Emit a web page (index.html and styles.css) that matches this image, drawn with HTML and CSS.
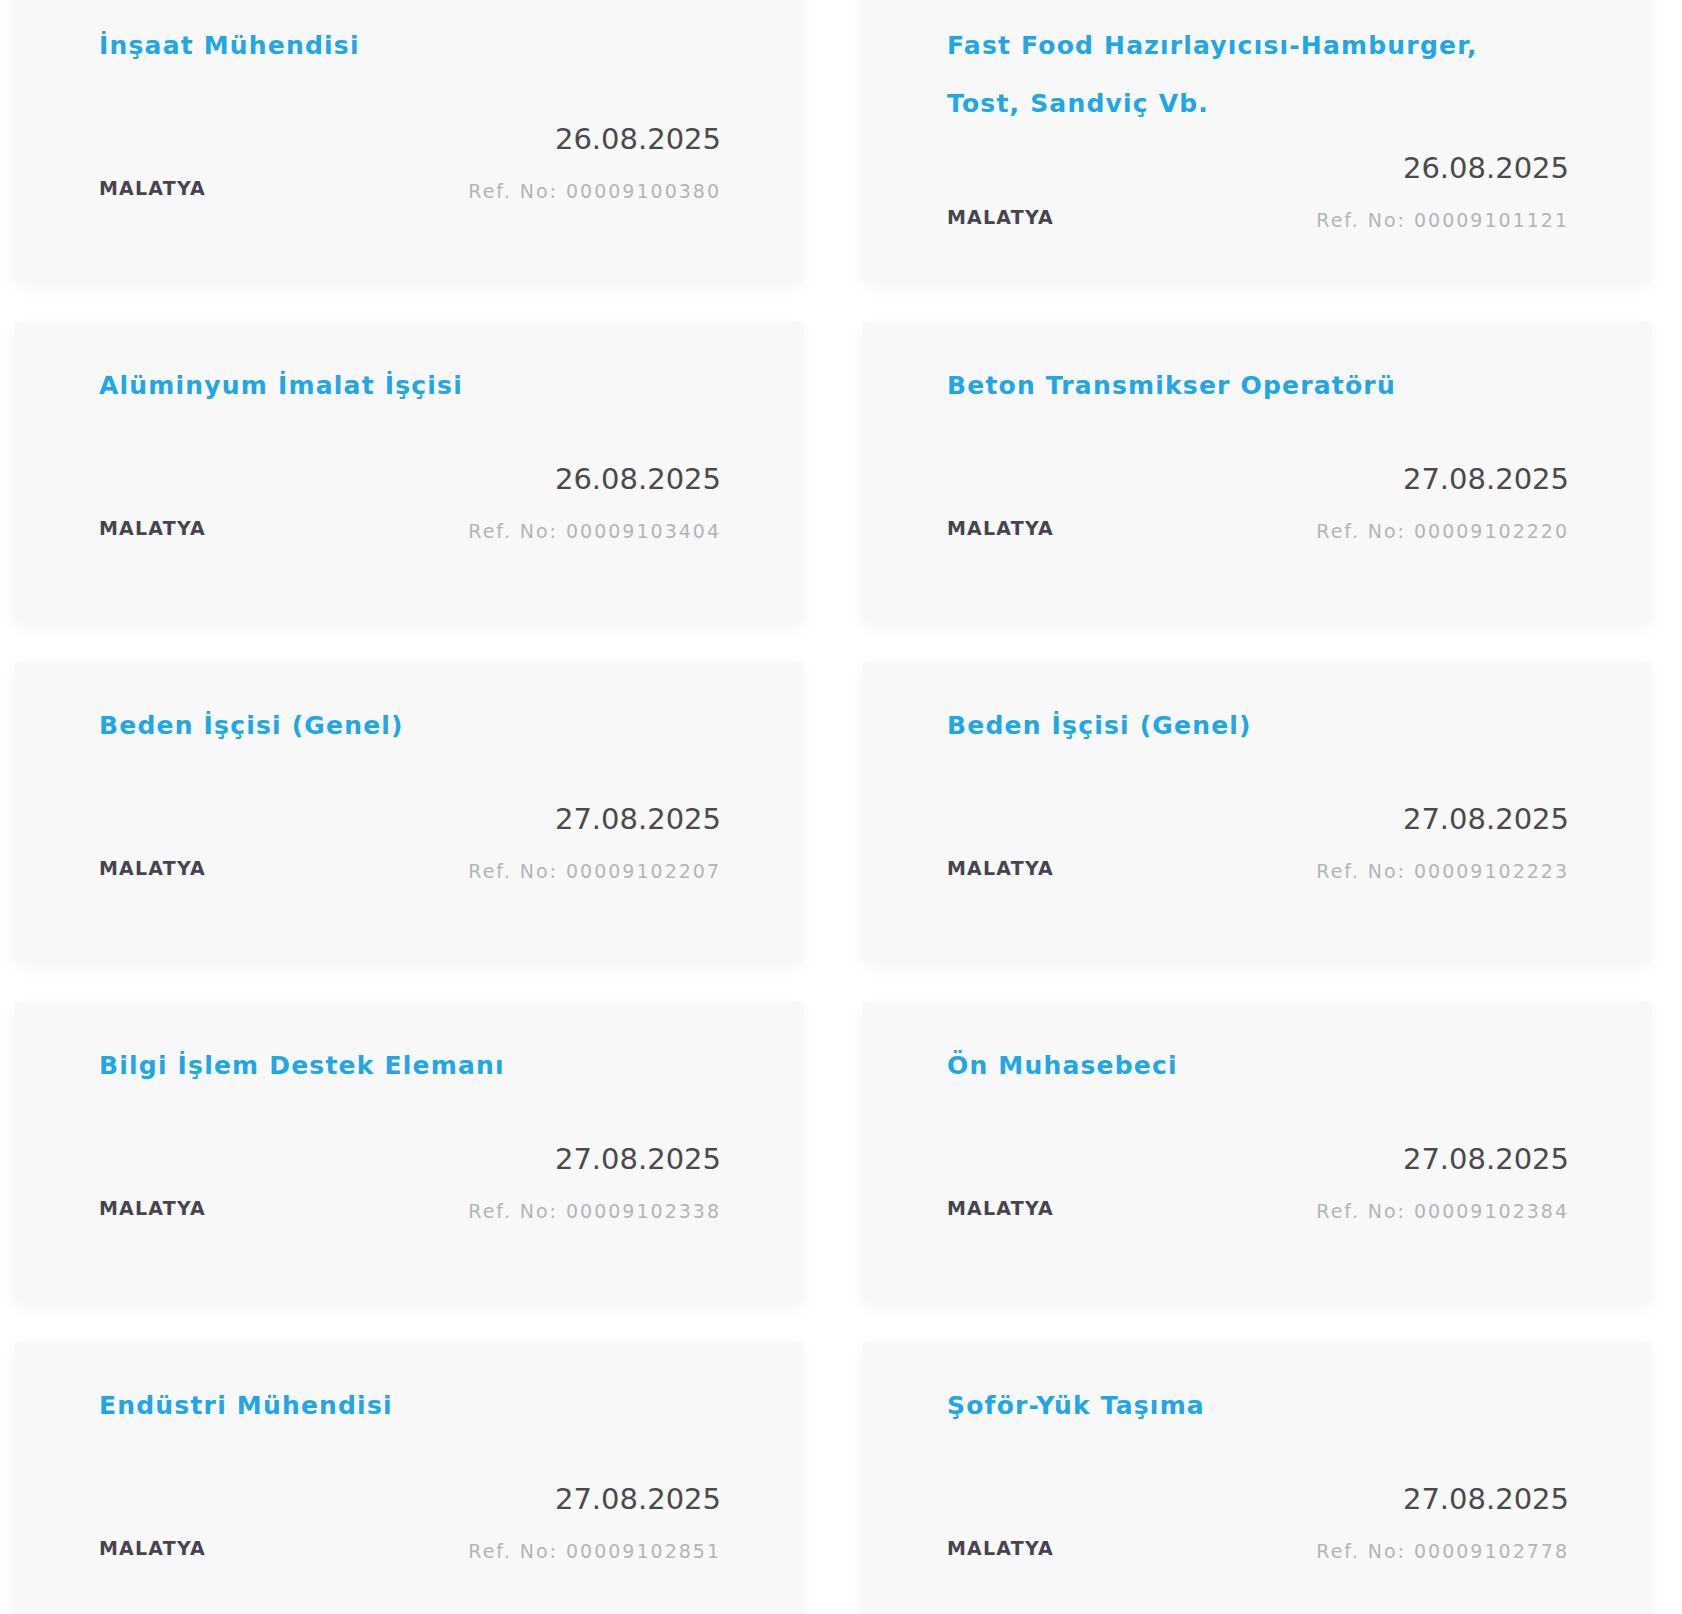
FILE: index.html
```html
<!DOCTYPE html>
<html lang="tr">
<head>
<meta charset="utf-8">
<title>İş İlanları</title>
<link rel="stylesheet" href="styles.css">
</head>
<body>
<div class="job-grid">
  <div class="job-card">
    <div class="job-title">İnşaat Mühendisi</div>
    <div class="job-meta">
      <div class="job-city">MALATYA</div>
      <div class="job-right"><div class="job-date">26.08.2025</div><div class="job-ref">Ref. No: 00009100380</div></div>
    </div>
  </div>
  <div class="job-card">
    <div class="job-title">Fast Food Hazırlayıcısı-Hamburger, Tost, Sandviç Vb.</div>
    <div class="job-meta">
      <div class="job-city">MALATYA</div>
      <div class="job-right"><div class="job-date">26.08.2025</div><div class="job-ref">Ref. No: 00009101121</div></div>
    </div>
  </div>
  <div class="job-card">
    <div class="job-title">Alüminyum İmalat İşçisi</div>
    <div class="job-meta">
      <div class="job-city">MALATYA</div>
      <div class="job-right"><div class="job-date">26.08.2025</div><div class="job-ref">Ref. No: 00009103404</div></div>
    </div>
  </div>
  <div class="job-card">
    <div class="job-title">Beton Transmikser Operatörü</div>
    <div class="job-meta">
      <div class="job-city">MALATYA</div>
      <div class="job-right"><div class="job-date">27.08.2025</div><div class="job-ref">Ref. No: 00009102220</div></div>
    </div>
  </div>
  <div class="job-card">
    <div class="job-title">Beden İşçisi (Genel)</div>
    <div class="job-meta">
      <div class="job-city">MALATYA</div>
      <div class="job-right"><div class="job-date">27.08.2025</div><div class="job-ref">Ref. No: 00009102207</div></div>
    </div>
  </div>
  <div class="job-card">
    <div class="job-title">Beden İşçisi (Genel)</div>
    <div class="job-meta">
      <div class="job-city">MALATYA</div>
      <div class="job-right"><div class="job-date">27.08.2025</div><div class="job-ref">Ref. No: 00009102223</div></div>
    </div>
  </div>
  <div class="job-card">
    <div class="job-title">Bilgi İşlem Destek Elemanı</div>
    <div class="job-meta">
      <div class="job-city">MALATYA</div>
      <div class="job-right"><div class="job-date">27.08.2025</div><div class="job-ref">Ref. No: 00009102338</div></div>
    </div>
  </div>
  <div class="job-card">
    <div class="job-title">Ön Muhasebeci</div>
    <div class="job-meta">
      <div class="job-city">MALATYA</div>
      <div class="job-right"><div class="job-date">27.08.2025</div><div class="job-ref">Ref. No: 00009102384</div></div>
    </div>
  </div>
  <div class="job-card">
    <div class="job-title">Endüstri Mühendisi</div>
    <div class="job-meta">
      <div class="job-city">MALATYA</div>
      <div class="job-right"><div class="job-date">27.08.2025</div><div class="job-ref">Ref. No: 00009102851</div></div>
    </div>
  </div>
  <div class="job-card">
    <div class="job-title">Şoför-Yük Taşıma</div>
    <div class="job-meta">
      <div class="job-city">MALATYA</div>
      <div class="job-right"><div class="job-date">27.08.2025</div><div class="job-ref">Ref. No: 00009102778</div></div>
    </div>
  </div>
</div>
</body>
</html>
```
FILE: styles.css
```css
html, body {
  margin: 0;
  padding: 0;
  background: #ffffff;
}
body {
  font-family: "DejaVu Sans", "Liberation Sans", sans-serif;
  overflow: hidden;
}
.job-grid {
  display: grid;
  grid-template-columns: 789px 789px;
  grid-auto-rows: 300px;
  column-gap: 59px;
  row-gap: 40px;
  padding-left: 15px;
  margin-top: -18px;
}
.job-card {
  box-sizing: border-box;
  background: #f8f8f8;
  box-shadow: 0 6px 16px rgba(0, 0, 0, 0.045);
  padding: 35px 83px 30px 84px;
  display: flex;
  flex-direction: column;
}
.job-title {
  color: #21a6e6;
  font-weight: bold;
  font-size: 25px;
  line-height: 58px;
  letter-spacing: 1.2px;
  max-width: 580px;
}
.job-meta {
  margin: auto 0;
  display: flex;
  justify-content: space-between;
  align-items: flex-end;
}
.job-city {
  font-weight: bold;
  font-size: 19px;
  line-height: 30px;
  letter-spacing: 1.2px;
  color: #474450;
  margin-bottom: 3px;
}
.job-right {
  text-align: right;
}
.job-date {
  font-size: 29px;
  line-height: 36px;
  color: #4a4a4c;
}
.job-ref {
  margin-top: 19px;
  font-size: 19px;
  line-height: 30px;
  letter-spacing: 2px;
  color: #b4b4b8;
}
```
